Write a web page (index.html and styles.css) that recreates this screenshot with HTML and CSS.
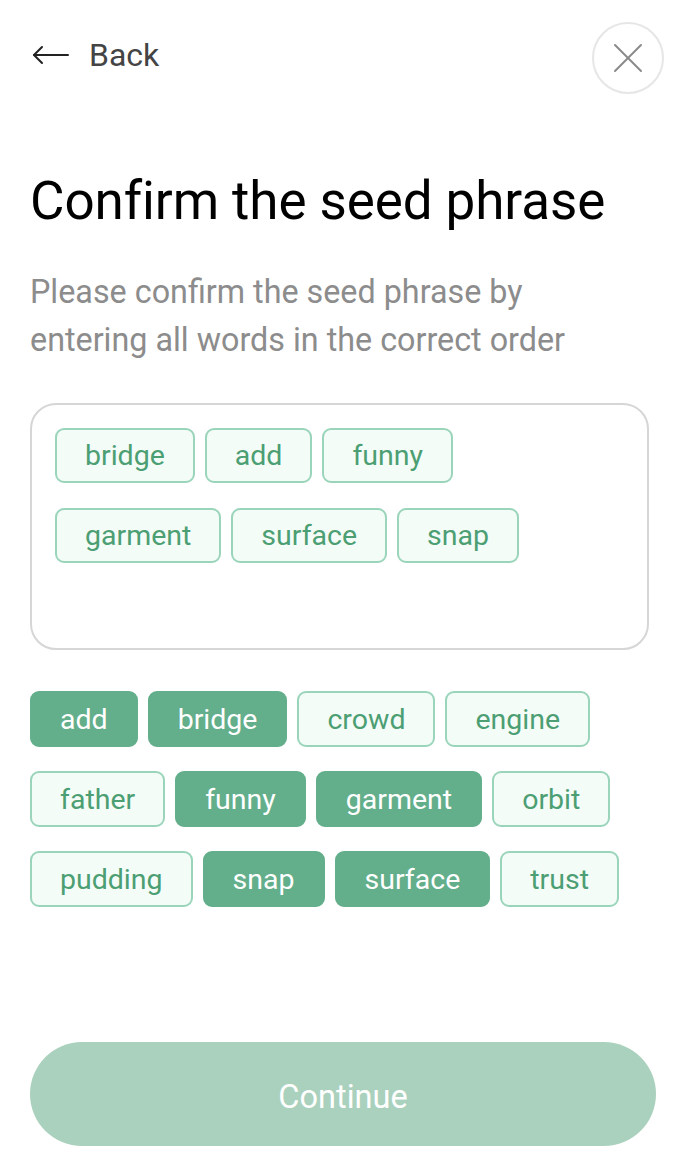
FILE: index.html
```html
<!DOCTYPE html>
<html lang="en">
<head>
<meta charset="utf-8">
<title>Confirm the seed phrase</title>
<link rel="stylesheet" href="styles.css">
</head>
<body>
<div class="screen">
  <header class="topbar">
    <a class="back" href="#">
      <svg class="back-arrow" width="38" height="20" viewBox="0 0 38 20" fill="none" stroke="#222" stroke-width="2" stroke-linecap="round" stroke-linejoin="round"><path d="M2 10H36"/><path d="M10 2L2 10L10 18"/></svg>
      <span>Back</span>
    </a>
    <button class="close" aria-label="Close">
      <svg width="30" height="30" viewBox="0 0 30 30" fill="none" stroke="#8a8a8a" stroke-width="2" stroke-linecap="round"><path d="M2 2L28 28"/><path d="M28 2L2 28"/></svg>
    </button>
  </header>

  <h1 class="title">Confirm the seed phrase</h1>
  <p class="subtitle">Please confirm the seed phrase by entering all words in the correct order</p>

  <div class="answer">
    <span class="chip">bridge</span>
    <span class="chip">add</span>
    <span class="chip">funny</span>
    <span class="chip">garment</span>
    <span class="chip">surface</span>
    <span class="chip">snap</span>
  </div>

  <div class="pool">
    <span class="chip filled">add</span>
    <span class="chip filled">bridge</span>
    <span class="chip">crowd</span>
    <span class="chip">engine</span>
    <span class="chip">father</span>
    <span class="chip filled">funny</span>
    <span class="chip filled">garment</span>
    <span class="chip">orbit</span>
    <span class="chip">pudding</span>
    <span class="chip filled">snap</span>
    <span class="chip filled">surface</span>
    <span class="chip">trust</span>
  </div>

  <div class="spacer"></div>

  <button class="continue">Continue</button>
</div>
</body>
</html>
```

FILE: styles.css
```css
* { box-sizing: border-box; }
html, body { margin: 0; padding: 0; background: #fff; }
body { font-family: Roboto, "Liberation Sans", sans-serif; }

.screen {
  width: 690px;
  height: 1172px;
  padding: 22px 26px 26px 30px;
  display: flex;
  flex-direction: column;
}

.topbar {
  display: flex;
  align-items: center;
  justify-content: space-between;
  height: 72px;
}
.back {
  display: flex;
  align-items: center;
  gap: 19px;
  text-decoration: none;
  color: #444;
  font-size: 32px;
  padding-left: 2px;
  margin-top: -6px;
}
.back span { line-height: 1; }
.close {
  width: 72px;
  height: 72px;
  border-radius: 50%;
  border: 2px solid #e6e6e6;
  background: #fff;
  display: flex;
  align-items: center;
  justify-content: center;
  padding: 0;
}

.title {
  margin: 75px 0 0;
  font-size: 53px;
  font-weight: 400;
  color: #000;
  line-height: 64px;
  letter-spacing: -0.1px;
}
.subtitle {
  margin: 35px 0 0;
  width: 590px;
  font-size: 32.3px;
  line-height: 48px;
  color: #8c8c8c;
}

.answer {
  margin-top: 39px;
  width: 619px;
  height: 247px;
  border: 2px solid #d6d6d6;
  border-radius: 26px;
  padding: 23px 23px;
  display: flex;
  flex-wrap: wrap;
  align-content: flex-start;
  gap: 25px 10px;
}

.pool {
  margin-top: 41px;
  display: flex;
  flex-wrap: wrap;
  gap: 24px 10px;
  width: 632px;
}

.chip {
  height: 56px;
  padding: 2px 28px 0;
  display: inline-flex;
  align-items: center;
  border: 2px solid #9ad5bb;
  border-radius: 9px;
  background: #f3fcf7;
  color: #4c9e73;
  font-size: 28.5px;
  line-height: 1;
}
.answer .chip { height: 55px; }
.chip.filled {
  background: #63ae8b;
  border-color: #63ae8b;
  color: #fff;
}

.spacer { flex: 1; }

.continue {
  width: 626px;
  height: 104px;
  border: none;
  border-radius: 52px;
  background: #aad1bd;
  color: #fff;
  font-family: Roboto, "Liberation Sans", sans-serif;
  font-size: 32.5px;
  padding: 6px 0 0;
}
```
